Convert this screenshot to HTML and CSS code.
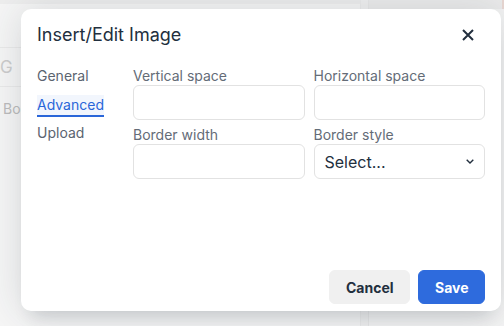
FILE: index.html
```html
<!DOCTYPE html>
<html lang="en">
<head>
    <meta charset="UTF-8">
    <meta name="viewport" content="width=device-width, initial-scale=1.0">
    <title>Insert/Edit Image</title>
    <link rel="stylesheet" href="styles.css">
</head>
<body>
    <div class="backdrop">
        <div class="editor">
            <div class="menubar"></div>
            <div class="toolbar"><span class="tool-icon">G</span></div>
            <div class="editor-body"><span class="ghost-label">Border width</span></div>
        </div>
        <div class="gutter"></div>
        <div class="sidebar"><div class="sidebar-top"></div></div>
    </div>

    <div class="dialog">
        <div class="dialog-header">
            <h2 class="dialog-title">Insert/Edit Image</h2>
            <button class="close-btn" aria-label="Close">
                <svg width="12" height="12" viewBox="0 0 12 12">
                    <path d="M1 1 L11 11 M11 1 L1 11" stroke="#222f3e" stroke-width="2" fill="none"/>
                </svg>
            </button>
        </div>
        <div class="dialog-body">
            <div class="tabs">
                <div class="tab">General</div>
                <div class="tab active">Advanced</div>
                <div class="tab">Upload</div>
            </div>
            <div class="form-grid">
                <label class="field">
                    <span class="field-label">Vertical space</span>
                    <input class="text-input" type="text">
                </label>
                <label class="field">
                    <span class="field-label">Horizontal space</span>
                    <input class="text-input" type="text">
                </label>
                <label class="field">
                    <span class="field-label">Border width</span>
                    <input class="text-input" type="text">
                </label>
                <div class="field">
                    <span class="field-label">Border style</span>
                    <div class="select-box">
                        <span>Select...</span>
                        <svg width="8" height="5" viewBox="0 0 8 5">
                            <path d="M0.7 0.7 L4 4 L7.3 0.7" stroke="#222f3e" stroke-width="1.4" fill="none"/>
                        </svg>
                    </div>
                </div>
            </div>
        </div>
        <div class="dialog-footer">
            <button class="btn btn-secondary">Cancel</button>
            <button class="btn btn-primary">Save</button>
        </div>
    </div>
</body>
</html>
```

FILE: styles.css
```css
body {
    margin: 0;
    padding: 0;
    font-family: Inter, "Noto Sans", sans-serif;
    background-color: #f3f3f3;
    width: 504px;
    height: 326px;
    overflow: hidden;
    position: relative;
}

/* faded editor behind the dialog */
.backdrop {
    display: flex;
    height: 326px;
}
.editor {
    width: 360px;
    border-right: 1px solid #ebebeb;
    display: flex;
    flex-direction: column;
    background-color: #f6f6f6;
}
.menubar {
    height: 48px;
    border-top: 4px solid #eeeeee;
    box-sizing: border-box;
    border-bottom: 1px solid #eaeaea;
}
.toolbar {
    height: 38px;
    border-bottom: 1px solid #eaeaea;
    display: flex;
    align-items: center;
}
.tool-icon {
    margin-left: 0;
    color: #cdcdcd;
    font-size: 17px;
}
.editor-body {
    flex: 1;
    padding: 11px 3px;
}
.ghost-label {
    color: #bcbcbc;
    font-size: 14px;
}
.gutter {
    width: 7px;
    background-color: #f1f1f1;
}
.sidebar {
    flex: 1;
    border-left: 1px solid #e8e8e8;
    background-color: #f4f4f4;
}
.sidebar-top {
    height: 9px;
    background-color: #ececec;
    border-right: 2px solid #ead8d3;
}

/* dialog */
.dialog {
    position: absolute;
    left: 21px;
    top: 9px;
    width: 480px;
    height: 302px;
    background-color: #fff;
    border-radius: 10px;
    box-shadow: 0 16px 16px -10px rgba(34, 47, 62, 0.15), 0 0 40px 1px rgba(34, 47, 62, 0.15);
    display: flex;
    flex-direction: column;
    color: #222f3e;
}
.dialog-header {
    display: flex;
    align-items: center;
    justify-content: space-between;
    padding: 9px 16px 0 16px;
    height: 34px;
}
.dialog-title {
    margin: 0;
    font-size: 18px;
    font-weight: 400;
    line-height: 34px;
}
.close-btn {
    width: 34px;
    height: 34px;
    border: none;
    background: none;
    padding: 0;
    display: flex;
    align-items: center;
    justify-content: center;
}

.dialog-body {
    display: flex;
    padding: 14px 16px 0 16px;
}
.tabs {
    width: 96px;
    flex-shrink: 0;
    display: flex;
    flex-direction: column;
    align-items: flex-start;
    gap: 6.5px;
}
.tab {
    font-size: 14px;
    line-height: 19px;
    color: #5b6470;
    padding-bottom: 1px;
    border-bottom: 2px solid transparent;
}
.tab.active {
    color: #2a66d9;
    border-bottom-color: #2a66d9;
    background-color: #f2f6fd;
}

.form-grid {
    flex: 1;
    min-width: 0;
    display: grid;
    grid-template-columns: minmax(0, 1fr) minmax(0, 1fr);
    column-gap: 9px;
    row-gap: 5px;
}
.field {
    display: flex;
    flex-direction: column;
    min-width: 0;
}
.field-label {
    font-size: 14px;
    line-height: 19px;
    color: #646c77;
}
.text-input,
.select-box {
    width: 100%;
    height: 35px;
    box-sizing: border-box;
    border: 1px solid #e2e2e2;
    border-radius: 6px;
    background-color: #fff;
    font-family: inherit;
    font-size: 16px;
    margin: 0;
}
.select-box {
    display: flex;
    align-items: center;
    justify-content: space-between;
    padding: 0 10px 0 10px;
    color: #222f3e;
}

.dialog-footer {
    margin-top: auto;
    display: flex;
    justify-content: flex-end;
    gap: 8px;
    padding: 0 16px 7px 16px;
}
.btn {
    height: 34px;
    padding: 0 16px;
    border-radius: 6px;
    font-family: inherit;
    font-size: 14px;
    font-weight: 700;
    border: 1px solid transparent;
}
.btn-secondary {
    background-color: #f0f0f0;
    border-color: #f0f0f0;
    color: #222f3e;
    width: 81px;
}
.btn-primary {
    background-color: #2e6bdd;
    border-color: #2e6bdd;
    color: #fff;
    width: 67px;
}
```
